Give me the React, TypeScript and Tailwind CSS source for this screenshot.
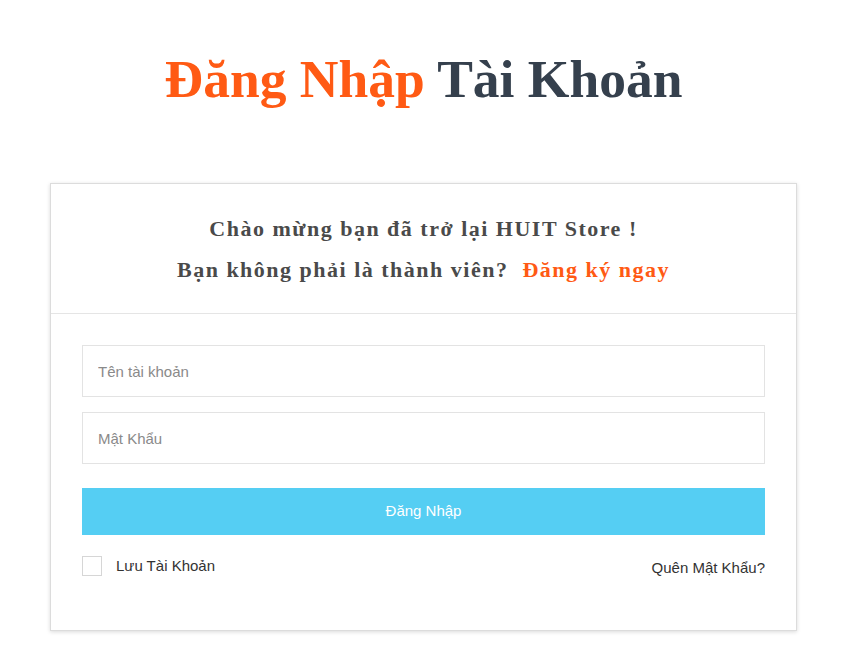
export default function App() {
  return (
    <div className="min-h-screen bg-white pr-[6px]">
      <h1 className="pt-[44px] text-center font-['Liberation_Serif',serif] text-[53.5px] font-bold leading-[70px] text-[#35404d]">
        <span className="text-[#ff5a14]">Đăng Nhập</span> Tài Khoản
      </h1>

      <div className="mx-[50px] mt-[69px] border border-[#dcdcdc] bg-white shadow-[0_1px_4px_rgba(0,0,0,0.15)]">
        {/* Card header */}
        <div className="border-b border-[#e5e5e5] px-4 pt-[31px] pb-[29px] text-center font-['Liberation_Serif',serif] text-[22px] font-bold tracking-[1.5px] text-[#4a4a4a]">
          <p className="leading-[28px]">Chào mừng bạn đã trở lại HUIT Store !</p>
          <p className="mt-[13px] leading-[28px]">
            Bạn không phải là thành viên?&nbsp;{' '}
            <a href="#" className="text-[#ff5a14]">Đăng ký ngay</a>
          </p>
        </div>

        {/* Form */}
        <form className="px-[31px] pt-[31px] pb-[50px] font-['Liberation_Sans',sans-serif]">
          <input
            type="text"
            placeholder="Tên tài khoản"
            className="block h-[52px] w-full border border-[#e3e3e3] px-[15px] text-[15px] text-[#555] outline-none placeholder:text-[#8a8a8a]"
          />
          <input
            type="password"
            placeholder="Mật Khẩu"
            className="mt-[15px] block h-[52px] w-full border border-[#e3e3e3] px-[15px] text-[15px] text-[#555] outline-none placeholder:text-[#8a8a8a]"
          />
          <button
            type="button"
            className="mt-[24px] block h-[47px] w-full bg-[#55cef3] text-[15px] text-white"
          >
            Đăng Nhập
          </button>
          <div className="mt-[18px] flex items-center justify-between text-[15px] text-[#333]">
            <label className="flex items-center gap-[14px]">
              <span className="block h-[20px] w-[20px] border border-[#d6d6d6] bg-white" />
              Lưu Tài Khoản
            </label>
            <a href="#" className="mt-[4px]">Quên Mật Khẩu?</a>
          </div>
        </form>
      </div>
    </div>
  )
}
